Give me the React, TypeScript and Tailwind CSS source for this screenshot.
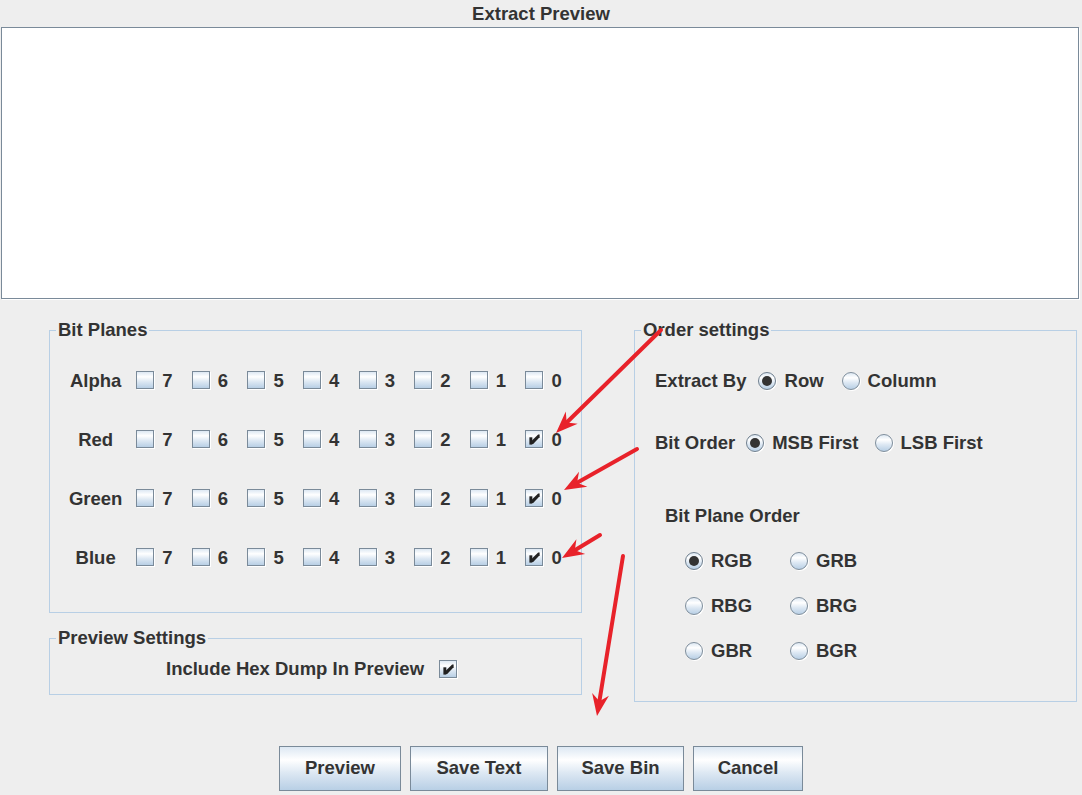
import React from "react";

function CheckBox({ checked }: { checked?: boolean }) {
  return (
    <div className="relative w-[19px] h-[19px] shrink-0">
      <div className="w-[18px] h-[18px] border border-[#7a8a99] bg-[linear-gradient(to_bottom,#dde8f3_0%,#ffffff_30%,#dde8f3_60%,#b8cfe5_100%)] shadow-[1px_1px_0_#ffffff]" />
      {checked && (
        <svg
          className="absolute left-0 top-0"
          width="19"
          height="19"
          viewBox="0 0 13 13"
        >
          <polygon points="3,5 5,5 5,10 3,10" fill="#222222" />
          <polygon points="9,3 10,3 10,5 5.6,9.6 4.6,9.6 4.6,7.4" fill="#222222" />
        </svg>
      )}
    </div>
  );
}

function Radio({ checked }: { checked?: boolean }) {
  return (
    <div
      className={
        "w-[18px] h-[18px] shrink-0 rounded-full border bg-[linear-gradient(to_bottom,#dde8f3_0%,#ffffff_30%,#dde8f3_60%,#b8cfe5_100%)] shadow-[1px_1px_0_#ffffff] flex items-center justify-center " +
        (checked ? "border-[#6f7f8e]" : "border-[#7f8e9c]")
      }
    >
      {checked && <div className="w-[10px] h-[10px] rounded-full bg-[#333333]" />}
    </div>
  );
}

function Panel({
  title,
  className,
  children,
}: {
  title: string;
  className: string;
  children?: React.ReactNode;
}) {
  return (
    <div className={"border border-[#b8cfe5] flex flex-col " + className}>
      <div className="-mt-[12px] ml-[6px] h-[22px] leading-[22px] px-[2px] bg-[#eeeeee] w-fit whitespace-nowrap">
        {title}
      </div>
      {children}
    </div>
  );
}

function BitRow({ label, checkedZero }: { label: string; checkedZero?: boolean }) {
  const bits = [7, 6, 5, 4, 3, 2, 1, 0];
  return (
    <div className="h-[59px] flex items-center">
      <div className="ml-[13px] w-[66px] text-center">{label}</div>
      <div className="ml-[8px] flex items-center">
        {bits.map((b) => (
          <div key={b} className="w-[55.6px] flex items-center">
            <CheckBox checked={checkedZero && b === 0} />
            <span className="ml-[7px]">{b}</span>
          </div>
        ))}
      </div>
    </div>
  );
}

function Arrow({ sx, sy, tx, ty }: { sx: number; sy: number; tx: number; ty: number }) {
  const dx = tx - sx;
  const dy = ty - sy;
  const len = Math.hypot(dx, dy);
  const ux = dx / len;
  const uy = dy / len;
  const px = -uy;
  const py = ux;
  const headLen = 22;
  const headW = 8.5;
  const notch = 15;
  const bx = tx - ux * headLen;
  const by = ty - uy * headLen;
  const nx = tx - ux * notch;
  const ny = ty - uy * notch;
  const pts = [
    [tx, ty],
    [bx + px * headW, by + py * headW],
    [nx, ny],
    [bx - px * headW, by - py * headW],
  ]
    .map((p) => p.join(","))
    .join(" ");
  return (
    <g>
      <line x1={sx} y1={sy} x2={nx} y2={ny} stroke="#e8222a" strokeWidth="4" strokeLinecap="round" />
      <polygon points={pts} fill="#e8222a" />
    </g>
  );
}

const btn =
  "h-[45px] border border-[#7a8a99] bg-[linear-gradient(to_bottom,#dde8f3_0%,#ffffff_30%,#dde8f3_60%,#b8cfe5_100%)] flex items-center justify-center pb-[1px]";

export default function App() {
  return (
    <div className="relative w-[1082px] h-[795px] bg-[#eeeeee] overflow-hidden font-['Liberation_Sans',Arial,sans-serif] font-bold text-[18.5px] text-[#333333]">
      <div className="h-[27px] flex items-center justify-center">Extract Preview</div>
      <div className="ml-[1px] w-[1078px] h-[272px] border border-[#7a8a99] bg-white shadow-[1px_1px_0_#ffffff]" />

      <div className="flex mt-[31px] h-[372px]">
        <div className="ml-[49px] w-[533px] flex flex-col">
          <Panel title="Bit Planes" className="h-[283px]">
            <div className="mt-[10px] flex flex-col">
              <BitRow label="Alpha" />
              <BitRow label="Red" checkedZero />
              <BitRow label="Green" checkedZero />
              <BitRow label="Blue" checkedZero />
            </div>
          </Panel>
          <Panel title="Preview Settings" className="mt-[25px] h-[57px]">
            <div className="h-[40px] pl-[116px] flex items-center">
              <span>Include Hex Dump In Preview</span>
              <div className="ml-[15px]">
                <CheckBox checked />
              </div>
            </div>
          </Panel>
        </div>

        <Panel title="Order settings" className="ml-[52px] w-[443px] h-[372px]">
          <div className="mt-[20px] h-[40px] pl-[20px] flex items-center">
            <span>Extract By</span>
            <div className="ml-[11px]">
              <Radio checked />
            </div>
            <span className="ml-[9px]">Row</span>
            <div className="ml-[18px]">
              <Radio />
            </div>
            <span className="ml-[8px]">Column</span>
          </div>
          <div className="mt-[22px] h-[40px] pl-[20px] flex items-center">
            <span>Bit Order</span>
            <div className="ml-[11px]">
              <Radio checked />
            </div>
            <span className="ml-[8px]">MSB First</span>
            <div className="ml-[16px]">
              <Radio />
            </div>
            <span className="ml-[8px]">LSB First</span>
          </div>
          <div className="mt-[42px] h-[22px] pl-[30px] flex items-center">Bit Plane Order</div>
          <div className="mt-[11px] pl-[50px] grid grid-cols-[105px_105px]">
            {[
              ["RGB", true],
              ["GRB", false],
              ["RBG", false],
              ["BRG", false],
              ["GBR", false],
              ["BGR", false],
            ].map(([name, sel]) => (
              <div key={name as string} className="h-[45px] flex items-center">
                <Radio checked={sel as boolean} />
                <span className="ml-[8px]">{name as string}</span>
              </div>
            ))}
          </div>
        </Panel>
      </div>

      <div className="mt-[44px] flex justify-center gap-[9px]">
        <button className={btn + " w-[122px]"}>Preview</button>
        <button className={btn + " w-[138px]"}>Save Text</button>
        <button className={btn + " w-[127px]"}>Save Bin</button>
        <button className={btn + " w-[110px]"}>Cancel</button>
      </div>

      <svg className="absolute inset-0 pointer-events-none" width="1082" height="795">
        <Arrow sx={661} sy={330} tx={556} ty={433} />
        <Arrow sx={637} sy={449} tx={564} ty={490} />
        <Arrow sx={600} sy={535} tx={562} ty={558} />
        <Arrow sx={623} sy={556} tx={597} ty={716} />
      </svg>
    </div>
  );
}
